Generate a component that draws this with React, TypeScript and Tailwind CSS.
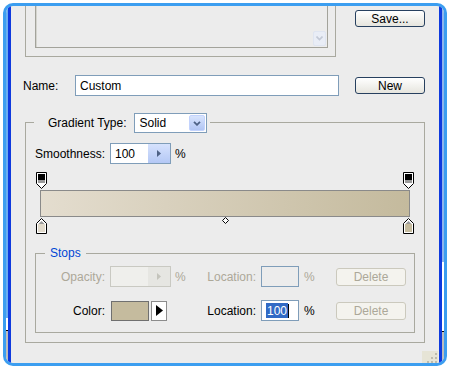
import React from 'react';

const XpButton: React.FC<{ children: React.ReactNode; className?: string }> = ({ children, className = '' }) => (
  <div
    className={`w-[70px] h-[17px] shrink-0 rounded-[3px] border border-[#27405f] bg-linear-to-b from-white to-[#e6e5de] flex items-center justify-center ${className}`}
  >
    {children}
  </div>
);

const DisabledButton: React.FC<{ children: React.ReactNode; className?: string }> = ({ children, className = '' }) => (
  <div
    className={`w-[70px] h-[18px] shrink-0 rounded-[3px] border border-[#cbc9bd] bg-[#f4f3ee] text-[#aca899] flex items-center justify-center ${className}`}
  >
    {children}
  </div>
);

const TopStop = () => (
  <svg width="11" height="17" viewBox="0 0 11 17">
    <path d="M0.5 0.5H10.5V11.5L5.5 16.5L0.5 11.5Z" fill="#fff" stroke="#000" />
    <rect x="2" y="2" width="7" height="6" fill="#000" />
    <rect x="2" y="8" width="7" height="3" fill="#9a9a9a" />
  </svg>
);

const BottomStop: React.FC<{ color: string }> = ({ color }) => (
  <svg width="11" height="16" viewBox="0 0 11 16">
    <path d="M5.5 0.5L10.5 5.5V15.5H0.5V5.5Z" fill="#fff" stroke="#000" />
    <path d="M5.5 3L8.5 6H2.5Z" fill="#9a9a9a" />
    <rect x="2" y="6" width="7" height="8" fill={color} />
  </svg>
);

const Midpoint = () => (
  <svg width="7" height="7" viewBox="0 0 7 7">
    <path d="M3.5 0.5L6.5 3.5L3.5 6.5L0.5 3.5Z" fill="#fff" stroke="#000" />
  </svg>
);

const App: React.FC = () => {
  return (
    <div className="w-[450px] h-[370px] bg-white p-[3px] font-['Liberation_Sans',Arial,sans-serif] text-[12px] leading-none text-black">
      <div className="w-[444px] h-[363px] rounded-[10px] border-[3px] border-[#3c9ef0] overflow-hidden flex bg-[#ececec]">
        {/* left window edge */}
        <div className="flex shrink-0">
          <div className="w-[2px] flex flex-col">
            <div className="h-[312px] bg-[#6aaef2]" />
            <div className="h-[12px] bg-white" />
            <div className="h-[1px] bg-black" />
            <div className="flex-1 bg-[#bdbdbd]" />
          </div>
          <div className="w-[3px] bg-[#0f3ade]" />
        </div>

        {/* dialog body */}
        <div className="w-[428px] flex flex-col">
          {/* preset list + Save */}
          <div className="flex items-start h-[73px] -mt-[22px] shrink-0">
            <div className="ml-[14px] w-[311px] h-[73px] border border-[#a9a99f] flex flex-col justify-end">
              <div className="ml-[9px] mb-[8px] w-[293px] h-[60px] border border-[#a3a39b] shadow-[inset_1px_1px_0_#d4d4ce] flex justify-end items-end p-[1px]">
                <div className="w-[13px] h-[15px] rounded-[2px] bg-[#e9edf6] border border-[#dfe5f1] flex items-center justify-center">
                  <svg width="7" height="5" viewBox="0 0 7 5">
                    <path d="M0.5 0.5L3.5 3.5L6.5 0.5" fill="none" stroke="#c3c9d6" strokeWidth="1.6" />
                  </svg>
                </div>
              </div>
            </div>
            <XpButton className="ml-[19px] mt-[26px]">Save...</XpButton>
          </div>

          {/* Name */}
          <div className="flex items-center h-[21px] mt-[18px] shrink-0">
            <span className="pl-[12px] w-[64px]">Name:</span>
            <div className="w-[264px] h-[21px] border border-[#7f9db9] bg-white flex items-center pl-[4px]">Custom</div>
            <XpButton className="ml-[16px]">New</XpButton>
          </div>

          {/* Gradient group */}
          <div className="relative mt-[26px] ml-[14px] w-[400px] h-[221px] border border-[#a9a99f] shrink-0">
            <div className="absolute left-[8px] top-[-10px] pl-[14px] pr-[3px] bg-[#ececec] flex items-center">
              <span>Gradient Type:</span>
              <div className="ml-[7px] w-[73px] h-[20px] border border-[#7f9db9] bg-white flex items-center">
                <span className="pl-[5px] flex-1">Solid</span>
                <div className="w-[16px] h-[16px] mr-[1px] rounded-[2px] border border-[#c3d3fd] bg-linear-to-b from-[#d8e4fd] to-[#b1c5f4] flex items-center justify-center">
                  <svg width="8" height="5" viewBox="0 0 8 5">
                    <path d="M1 0.8L4 3.8L7 0.8" fill="none" stroke="#4d6185" strokeWidth="1.8" />
                  </svg>
                </div>
              </div>
            </div>

            <div className="flex items-center mt-[20px] h-[21px]">
              <span className="pl-[9px] w-[84px]">Smoothness:</span>
              <div className="w-[61px] h-[21px] border border-[#7f9db9] bg-white flex">
                <span className="flex-1 pl-[4px] flex items-center">100</span>
                <div className="w-[22px] h-full bg-linear-to-b from-[#d6e2fd] to-[#b4c8f5] flex items-center justify-center">
                  <svg width="4" height="7" viewBox="0 0 4 7">
                    <path d="M0 0L4 3.5L0 7Z" fill="#4d6185" />
                  </svg>
                </div>
              </div>
              <span className="ml-[4px]">%</span>
            </div>

            <div className="mt-[8px] ml-[10px] w-[378px] h-[17px] flex justify-between">
              <TopStop />
              <TopStop />
            </div>
            <div className="mt-[1px] ml-[14px] w-[370px] h-[27px] border border-[#8a8a8a] bg-linear-to-r from-[#e4ddcf] to-[#c4ba9d]" />
            <div className="ml-[10px] w-[378px] h-[17px] flex justify-between items-start">
              <div className="mt-[1px]">
                <BottomStop color="#e2dbcc" />
              </div>
              <Midpoint />
              <div className="mt-[1px]">
                <BottomStop color="#c5bb9e" />
              </div>
            </div>

            {/* Stops */}
            <div className="relative mt-[19px] ml-[9px] w-[380px] h-[80px] border border-[#a9a99f]">
              <span className="absolute left-[9px] top-[-7px] px-[5px] bg-[#ececec] text-[#0046d5]">Stops</span>

              <div className="flex items-center mt-[12px] h-[21px] text-[#aca899]">
                <span className="w-[69px] text-right">Opacity:</span>
                <div className="ml-[5px] w-[61px] h-[21px] border border-[#c9c9c2] bg-[#efefec] flex">
                  <span className="flex-1" />
                  <div className="w-[22px] h-full bg-[#e6e6e2] flex items-center justify-center">
                    <svg width="4" height="7" viewBox="0 0 4 7">
                      <path d="M0 0L4 3.5L0 7Z" fill="#c4c4bc" />
                    </svg>
                  </div>
                </div>
                <span className="ml-[4px] w-[14px]">%</span>
                <span className="w-[67px] text-right">Location:</span>
                <div className="ml-[5px] w-[38px] h-[21px] border border-[#7f9db9]" />
                <span className="ml-[5px] w-[12px]">%</span>
                <DisabledButton className="ml-[20px]">Delete</DisabledButton>
              </div>

              <div className="flex items-center mt-[13px] h-[21px]">
                <span className="w-[69px] text-right">Color:</span>
                <div className="ml-[6px] w-[38px] h-[20px] border border-[#707070] bg-[#c5bb9e]" />
                <div className="ml-[2px] w-[16px] h-[20px] border border-[#8c8c8c] bg-white flex items-center justify-center">
                  <svg width="7" height="11" viewBox="0 0 7 11">
                    <path d="M0 0L7 5.5L0 11Z" fill="#000" />
                  </svg>
                </div>
                <span className="ml-[22px] w-[67px] text-right">Location:</span>
                <div className="ml-[5px] w-[38px] h-[21px] border border-[#7f9db9] bg-white flex items-center pl-[4px]">
                  <span className="bg-[#316ac5] text-white px-[1px] h-[15px] flex items-center">100</span>
                  <span className="w-[1px] h-[14px] bg-black" />
                </div>
                <span className="ml-[5px] w-[12px]">%</span>
                <DisabledButton className="ml-[20px]">Delete</DisabledButton>
              </div>
            </div>
          </div>

          {/* size grip */}
          <div className="flex justify-end mt-[8px] mr-[1px]">
            <div className="w-[16px] h-[13px] bg-[#e6e4d6] flex items-end justify-end">
              <svg width="11" height="11" viewBox="0 0 11 11">
                <rect x="8" y="0" width="2" height="2" fill="#bdbbad" />
                <rect x="8" y="4" width="2" height="2" fill="#bdbbad" />
                <rect x="4" y="4" width="2" height="2" fill="#bdbbad" />
                <rect x="8" y="8" width="2" height="2" fill="#bdbbad" />
                <rect x="4" y="8" width="2" height="2" fill="#bdbbad" />
                <rect x="0" y="8" width="2" height="2" fill="#bdbbad" />
              </svg>
            </div>
          </div>
        </div>

        {/* right window edge */}
        <div className="flex shrink-0">
          <div className="w-[3px] bg-[#0f3ade]" />
          <div className="w-[2px] flex flex-col">
            <div className="h-[256px] bg-[#8fb5ec]" />
            <div className="h-[69px] bg-white" />
            <div className="h-[1px] bg-black" />
            <div className="flex-1 bg-[#bdbdbd]" />
          </div>
        </div>
      </div>
    </div>
  );
};

export default App;
